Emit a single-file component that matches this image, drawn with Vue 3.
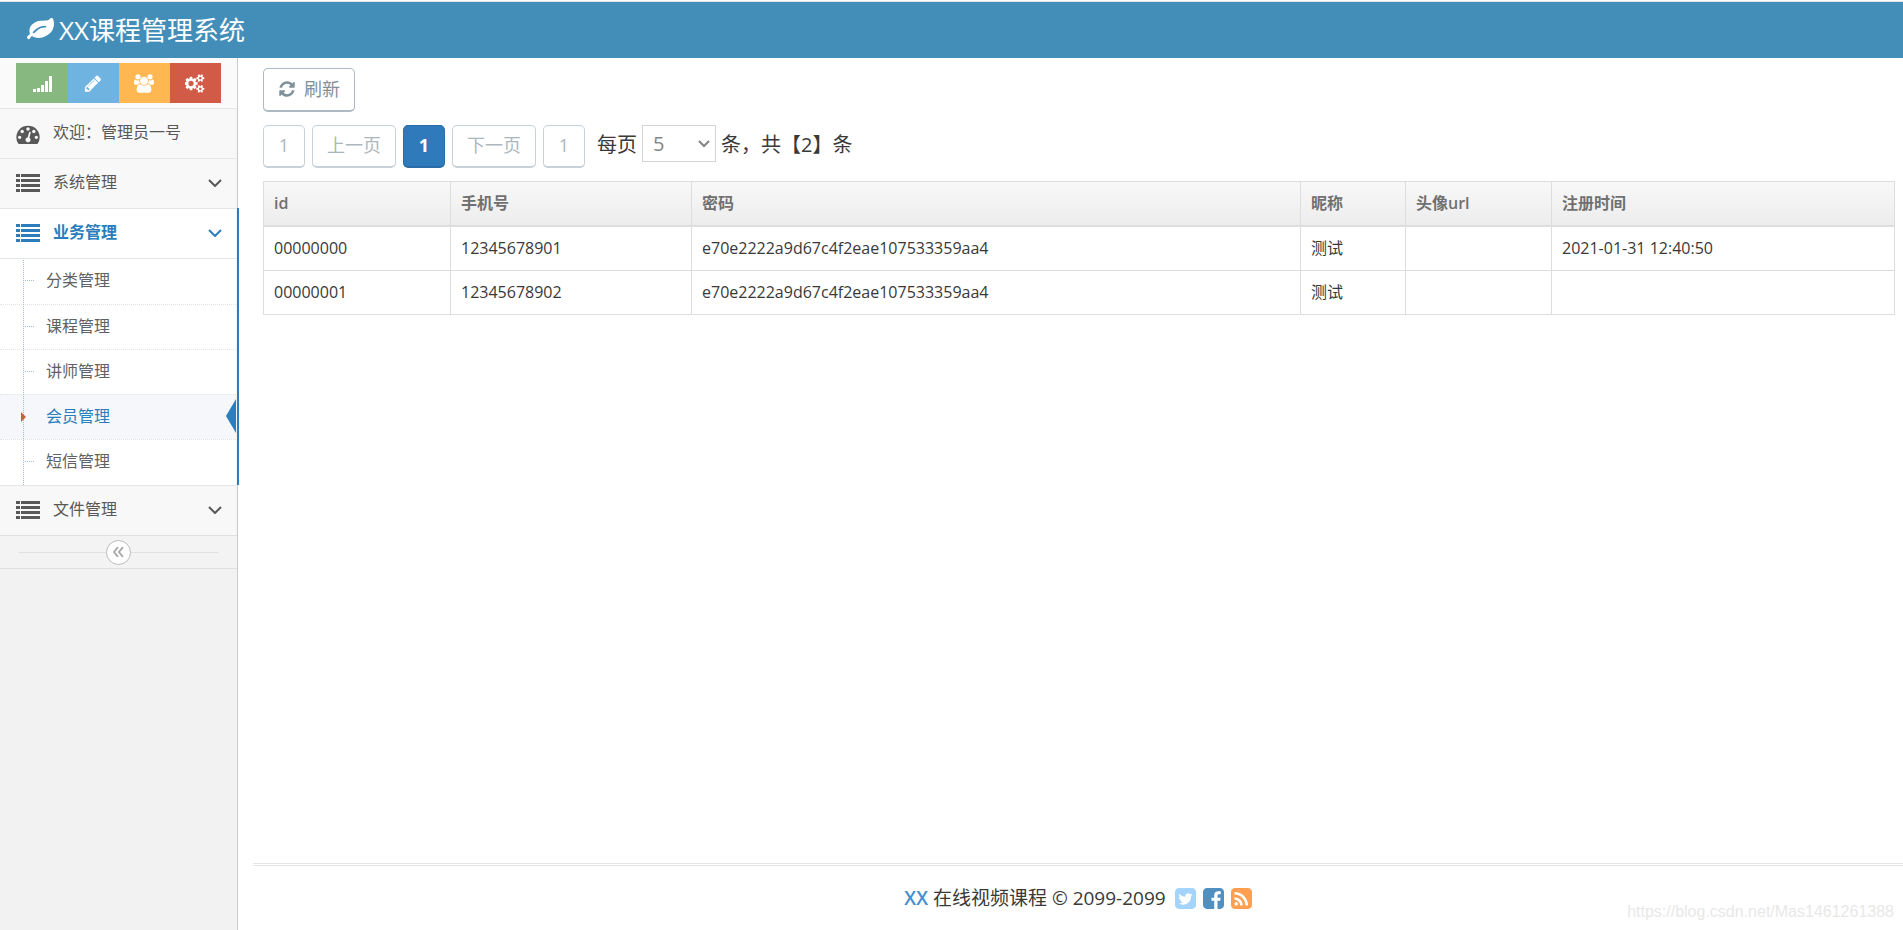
<script setup>
import { ref } from 'vue'

const pageSize = ref('5')
const submenu = ['分类管理', '课程管理', '讲师管理', '会员管理', '短信管理']
const activeSub = '会员管理'
const members = [
  { id: '00000000', mobile: '12345678901', password: 'e70e2222a9d67c4f2eae107533359aa4', name: '测试', photo: '', time: '2021-01-31 12:40:50' },
  { id: '00000001', mobile: '12345678902', password: 'e70e2222a9d67c4f2eae107533359aa4', name: '测试', photo: '', time: '' }
]
</script>

<template>
  <div class="app">
    <header class="navbar">
      <a class="brand" href="#">
        <svg class="leaf" viewBox="0 0 1792 1792" aria-hidden="true"><path d="M1280 704q0-26-19-45t-45-19q-172 0-318 49.5t-259.5 134-235.5 219.5q-19 21-19 45 0 26 19 45t45 19q24 0 45-19 27-24 74-71t67-66q137-124 268.5-176t313.5-52q26 0 45-19t19-45zm512-198q0 95-20 193-46 224-184.5 383t-357.5 268q-214 108-438 108-148 0-286-47-15-5-88-42t-96-37q-16 0-39.5 32t-45 70-52.5 70-60 32q-43 0-63.5-17.5t-45.5-59.5q-2-4-6-11t-5.5-10-3-9.5-1.5-13.5q0-35 31-73.5t68-65.5 68-56 31-48q0-4-14-38t-16-44q-9-51-9-104 0-115 43.5-220t119-184.5 170.5-139 204-95.5q55-18 145-25.5t179.5-9 178.5-6 163.5-24 113.5-56.5l29.5-29.5 29.5-28 27-20 36.5-16 43.5-4.5q39 0 70.5 46t47.5 112 24 124 8 96z" /></svg>
        <span>XX课程管理系统</span>
      </a>
    </header>

    <div class="body">
      <aside class="sidebar">
        <div class="shortcuts">
          <button class="green" type="button" aria-label="统计">
            <svg viewBox="-1 -1 20 19" aria-hidden="true"><path d="M0 14h3v3H0zM4 13h3v4H4zM8 10h3v7H8zM12 6h3v11h-3zM16 1h3v16h-3z" /></svg>
          </button>
          <button class="blue" type="button" aria-label="编辑">
            <svg viewBox="0 0 1792 1792" aria-hidden="true"><path d="M491 1536l91-91-235-235-91 91v107h128v128h107zm523-928q0-22-22-22-10 0-17 7l-542 542q-7 7-7 17 0 22 22 22 10 0 17-7l542-542q7-7 7-17zm-54-192l416 416-832 832h-416v-416zm683 96q0 53-37 90l-166 166-416-416 166-165q36-38 90-38 53 0 91 38l235 234q37 39 37 91z" /></svg>
          </button>
          <button class="orange" type="button" aria-label="用户">
            <svg viewBox="-64 0 1920 1792" aria-hidden="true"><path d="M529 896q-162 5-265 128h-134q-82 0-138-40.5t-56-118.5q0-353 124-353 6 0 43.5 21t97.5 42.5 119 21.5q67 0 133-23-5 37-5 66 0 139 81 256zm1071 637q0 120-73 189.5t-194 69.5h-874q-121 0-194-69.5t-73-189.5q0-53 3.5-103.5t14-109 26.5-108.5 43-97.5 62-81 85.5-53.5 111.5-20q10 0 43 21.5t73 48 107 48 135 21.5 135-21.5 107-48 73-48 43-21.5q61 0 111.5 20t85.5 53.5 62 81 43 97.5 26.5 108.5 14 109 3.5 103.5zm-1024-1277q0 106-75 181t-181 75-181-75-75-181 75-181 181-75 181 75 75 181zm704 384q0 159-112.5 271.5t-271.5 112.5-271.5-112.5-112.5-271.5 112.5-271.5 271.5-112.5 271.5 112.5 112.5 271.5zm576 225q0 78-56 118.5t-138 40.5h-134q-103-123-265-128 81-117 81-256 0-29-5-66 66 23 133 23 59 0 119-21.5t97.5-42.5 43.5-21q124 0 124 353zm-128-609q0 106-75 181t-181 75-181-75-75-181 75-181 181-75 181 75 75 181z" /></svg>
          </button>
          <button class="red" type="button" aria-label="设置">
            <svg viewBox="0 0 1920 1792" aria-hidden="true"><path d="M832 896q0-106-75-181t-181-75-181 75-75 181 75 181 181 75 181-75 75-181zm768 512q0-52-38-90t-90-38-90 38-38 90q0 53 37.5 90.5t90.5 37.5 90.5-37.5 37.5-90.5zm0-1024q0-52-38-90t-90-38-90 38-38 90q0 53 37.5 90.5t90.5 37.5 90.5-37.5 37.5-90.5zm-384 421v185q0 10-7 19.5t-16 10.5l-155 24q-11 35-32 76 34 48 90 115 7 11 7 20 0 12-7 19-23 30-82.5 89.5t-78.5 59.5q-11 0-21-7l-115-90q-37 19-77 31-11 108-23 155-7 24-30 24h-186q-11 0-20-7.5t-10-17.5l-23-153q-34-10-75-31l-118 89q-7 7-20 7-11 0-21-8-144-133-144-160 0-9 7-19 10-14 41-53t47-61q-23-44-35-82l-152-24q-10-1-17-9.5t-7-19.5v-185q0-10 7-19.5t16-10.5l155-24q11-35 32-76-34-48-90-115-7-11-7-20 0-12 7-20 22-30 82-89t79-59q11 0 21 7l115 90q34-18 77-32 11-108 23-154 7-24 30-24h186q11 0 20 7.5t10 17.5l23 153q34 10 75 31l118-89q8-7 20-7 11 0 21 8 144 133 144 160 0 8-7 19-12 16-42 54t-45 60q23 48 34 82l152 23q10 2 17 10.5t7 19.5zm640 533v140q0 16-149 31-12 27-30 52 51 113 51 138 0 4-4 7-122 71-124 71-8 0-46-47t-52-68q-20 2-30 2t-30-2q-14 21-52 68t-46 47q-2 0-124-71-4-3-4-7 0-25 51-138-18-25-30-52-149-15-149-31v-140q0-16 149-31 13-29 30-52-51-113-51-138 0-4 4-7 4-2 35-20t59-34 30-16q8 0 46 46.5t52 67.5q20-2 30-2t30 2q51-71 92-112l6-2q4 0 124 70 4 3 4 7 0 25-51 138 17 23 30 52 149 15 149 31zm0-1024v140q0 16-149 31-12 27-30 52 51 113 51 138 0 4-4 7-122 71-124 71-8 0-46-47t-52-68q-20 2-30 2t-30-2q-14 21-52 68t-46 47q-2 0-124-71-4-3-4-7 0-25 51-138-18-25-30-52-149-15-149-31v-140q0-16 149-31 13-29 30-52-51-113-51-138 0-4 4-7 4-2 35-20t59-34 30-16q8 0 46 46.5t52 67.5q20-2 30-2t30 2q51-71 92-112l6-2q4 0 124 70 4 3 4 7 0 25-51 138 17 23 30 52 149 15 149 31z" /></svg>
          </button>
        </div>

        <nav>
          <ul class="menu">
            <li>
              <a class="item" href="#">
                <svg class="gauge-icon" viewBox="0 128 1792 1536" aria-hidden="true"><path d="M384 1152q0-53-37.5-90.5t-90.5-37.5-90.5 37.5-37.5 90.5 37.5 90.5 90.5 37.5 90.5-37.5 37.5-90.5zm192-448q0-53-37.5-90.5t-90.5-37.5-90.5 37.5-37.5 90.5 37.5 90.5 90.5 37.5 90.5-37.5 37.5-90.5zm428 481l101-382q6-26-7.5-48.5t-38.5-29.5-48 6.5-30 39.5l-101 382q-60 5-107 43.5t-63 98.5q-20 77 20 146t117 89 146-20 89-117q16-60-6-117t-72-91zm660-33q0-53-37.5-90.5t-90.5-37.5-90.5 37.5-37.5 90.5 37.5 90.5 90.5 37.5 90.5-37.5 37.5-90.5zm-640-640q0-53-37.5-90.5t-90.5-37.5-90.5 37.5-37.5 90.5 37.5 90.5 90.5 37.5 90.5-37.5 37.5-90.5zm448 192q0-53-37.5-90.5t-90.5-37.5-90.5 37.5-37.5 90.5 37.5 90.5 90.5 37.5 90.5-37.5 37.5-90.5zm320 448q0 261-141 483-19 29-54 29h-1402q-35 0-54-29-141-221-141-483 0-182 71-348t191-286 286-191 348-71 348 71 286 191 191 286 71 348z" /></svg>
                <span class="label">欢迎：管理员一号</span>
              </a>
            </li>
            <li>
              <a class="item" href="#">
                <svg class="list-icon" viewBox="0 0 24 18" aria-hidden="true"><path d="M0 0h4v3H0zM5 0h19v3H5zM0 5h4v3H0zM5 5h19v3H5zM0 10h4v3H0zM5 10h19v3H5zM0 15h4v3H0zM5 15h19v3H5z" /></svg>
                <span class="label">系统管理</span>
                <svg class="angle" viewBox="0 0 14 8" aria-hidden="true"><path d="M1 1l6 6 6-6" /></svg>
              </a>
            </li>
            <li class="open">
              <a class="item" href="#">
                <svg class="list-icon" viewBox="0 0 24 18" aria-hidden="true"><path d="M0 0h4v3H0zM5 0h19v3H5zM0 5h4v3H0zM5 5h19v3H5zM0 10h4v3H0zM5 10h19v3H5zM0 15h4v3H0zM5 15h19v3H5z" /></svg>
                <span class="label">业务管理</span>
                <svg class="angle" viewBox="0 0 14 8" aria-hidden="true"><path d="M1 1l6 6 6-6" /></svg>
              </a>
              <ul class="submenu">
                <li v-for="s in submenu" :key="s" :class="{ current: s === activeSub }">
                  <a href="#">{{ s }}</a>
                </li>
              </ul>
            </li>
            <li>
              <a class="item" href="#">
                <svg class="list-icon" viewBox="0 0 24 18" aria-hidden="true"><path d="M0 0h4v3H0zM5 0h19v3H5zM0 5h4v3H0zM5 5h19v3H5zM0 10h4v3H0zM5 10h19v3H5zM0 15h4v3H0zM5 15h19v3H5z" /></svg>
                <span class="label">文件管理</span>
                <svg class="angle" viewBox="0 0 14 8" aria-hidden="true"><path d="M1 1l6 6 6-6" /></svg>
              </a>
            </li>
          </ul>
        </nav>

        <div class="collapse">
          <button type="button" aria-label="收起菜单">
            <svg viewBox="0 0 11 10" aria-hidden="true"><path d="M5 0L1 5l4 5M10 0L6 5l4 5" /></svg>
          </button>
        </div>
      </aside>

      <div class="main">
        <main class="content">
          <button class="btn refresh" type="button">
            <svg viewBox="0 0 1792 1792" aria-hidden="true"><path d="M1639 1056q0 5-1 7-64 268-268 434.5t-478 166.5q-146 0-282.5-55t-243.5-157l-129 129q-19 19-45 19t-45-19-19-45v-448q0-26 19-45t45-19h448q26 0 45 19t19 45-19 45l-137 137q71 66 161 102t187 36q134 0 250-65t186-179q11-17 53-117 8-23 30-23h192q13 0 22.5 9.5t9.5 22.5zm25-800v448q0 26-19 45t-45 19h-448q-26 0-45-19t-19-45 19-45l138-138q-148-137-349-137-134 0-250 65t-186 179q-11 17-53 117-8 23-30 23h-199q-13 0-22.5-9.5t-9.5-22.5v-7q65-268 270-434.5t480-166.5q146 0 284 55.5t245 156.5l130-129q19-19 45-19t45 19 19 45z" /></svg>
            <span>刷新</span>
          </button>

          <div class="pager">
            <button class="btn" type="button" disabled>1</button>
            <button class="btn" type="button" disabled>上一页</button>
            <button class="btn active" type="button">1</button>
            <button class="btn" type="button" disabled>下一页</button>
            <button class="btn" type="button" disabled>1</button>
            <div class="size">
              <label class="size-text" for="page-size">每页</label>
              <span class="select">
                <select id="page-size" v-model="pageSize">
                  <option>1</option>
                  <option>5</option>
                  <option>10</option>
                  <option>20</option>
                </select>
                <svg viewBox="0 0 12 8" aria-hidden="true"><path d="M1 1l5 5 5-5" /></svg>
              </span>
              <span class="size-text">条，共【2】条</span>
            </div>
          </div>

          <table>
            <colgroup>
              <col class="c-id"><col class="c-mobile"><col><col class="c-name"><col class="c-photo"><col class="c-time">
            </colgroup>
            <thead>
              <tr><th>id</th><th>手机号</th><th>密码</th><th>昵称</th><th>头像url</th><th>注册时间</th></tr>
            </thead>
            <tbody>
              <tr v-for="m in members" :key="m.id">
                <td>{{ m.id }}</td><td>{{ m.mobile }}</td><td>{{ m.password }}</td><td>{{ m.name }}</td><td>{{ m.photo }}</td><td>{{ m.time }}</td>
              </tr>
            </tbody>
          </table>
        </main>

        <footer class="footer">
          <span><b>XX</b> 在线视频课程 © 2099-2099</span>
          <span class="social">
            <a class="twitter" href="#" aria-label="Twitter"><svg viewBox="128 128 1536 1536" aria-hidden="true"><path d="M1408 610q-56 25-121 34 68-40 93-117-65 38-134 51-61-66-153-66-87 0-148.5 61.5t-61.5 148.5q0 29 5 48-129-7-242-65t-192-155q-29 50-29 106 0 114 91 175-47-1-100-26v2q0 75 50 133.5t123 72.5q-29 8-51 8-13 0-39-4 21 63 74.5 104t121.5 42q-116 90-261 90-26 0-50-3 148 94 322 94 112 0 210-35.5t168-95 120.5-137 75-162 24.5-168.5q0-18-1-27 63-45 105-109zm256-194v960q0 119-84.5 203.5t-203.5 84.5h-960q-119 0-203.5-84.5t-84.5-203.5v-960q0-119 84.5-203.5t203.5-84.5h960q119 0 203.5 84.5t84.5 203.5z" /></svg></a>
            <a class="facebook" href="#" aria-label="Facebook"><svg viewBox="128 128 1536 1536" aria-hidden="true"><path d="M1376 128q119 0 203.5 84.5t84.5 203.5v960q0 119-84.5 203.5t-203.5 84.5h-188v-595h199l30-232h-229v-148q0-56 23.5-84t91.5-28l122-1v-207q-63-9-178-9-136 0-217.5 80t-81.5 226v171h-200v232h200v595h-532q-119 0-203.5-84.5t-84.5-203.5v-960q0-119 84.5-203.5t203.5-84.5h960z" /></svg></a>
            <a class="rss" href="#" aria-label="RSS"><svg viewBox="128 128 1536 1536" aria-hidden="true"><path d="M640 1280q0-53-37.5-90.5t-90.5-37.5-90.5 37.5-37.5 90.5 37.5 90.5 90.5 37.5 90.5-37.5 37.5-90.5zm351 94q-13-232-177-396t-396-177q-14-1-24 9t-10 23v128q0 13 8.5 22t21.5 10q154 11 264 121t121 264q1 13 10 21.5t22 8.5h128q13 0 23-10t9-24zm384 1q-5-154-56-297.5t-139.5-260-205-205-260-139.5-297.5-56q-14-1-23 9-10 10-10 23v128q0 13 9 22t22 10q204 7 378 111.5t278.5 278.5 111.5 378q1 13 10 22t22 9h128q13 0 23-10 11-9 9-23zm289-959v960q0 119-84.5 203.5t-203.5 84.5h-960q-119 0-203.5-84.5t-84.5-203.5v-960q0-119 84.5-203.5t203.5-84.5h960q119 0 203.5 84.5t84.5 203.5z" /></svg></a>
          </span>
        </footer>
      </div>
    </div>
    <div class="watermark">https://blog.csdn.net/Mas1461261388</div>
  </div>
</template>

<style>
body {
  margin: 0;
  background: #fff;
}
</style>

<style scoped>
* {
  box-sizing: border-box;
}
.app {
  position: relative;
  display: flex;
  flex-direction: column;
  min-height: 100vh;
  padding-top: 1px;
  font-family: "Open Sans", "Noto Sans CJK SC", sans-serif;
  font-size: 16px;
  font-weight: 400;
  line-height: 24px;
  color: #393939;
}
button,
select {
  font: inherit;
  margin: 0;
}
a {
  text-decoration: none;
  color: inherit;
}
svg {
  display: block;
  fill: currentColor;
}
ul {
  list-style: none;
  margin: 0;
  padding: 0;
}
.navbar {
  display: flex;
  align-items: center;
  height: 57px;
  padding: 0 27px;
  border-top: 1px solid #e4e4e4;
  background: #438eb9;
}
.brand {
  display: flex;
  align-items: center;
  gap: 5px;
  padding-bottom: 1px;
  color: #fff;
  font-size: 26px;
  line-height: 32px;
}
.leaf {
  width: 27px;
  height: 27px;
}
.body {
  flex: 1;
  display: flex;
}
.sidebar {
  flex: none;
  width: 238px;
  border-right: 1px solid #ccc;
  background: #f2f2f2;
}
.shortcuts {
  display: flex;
  height: 50px;
  padding: 5px 16px;
  background: #fafafa;
}
.shortcuts button {
  flex: 1;
  display: flex;
  align-items: center;
  justify-content: center;
  padding: 0;
  border: 0;
  color: #fff;
}
.shortcuts svg {
  width: 20px;
  height: 19px;
}
.green { background: #87b87f; }
.blue { background: #6fb3e0; }
.orange { background: #ffb752; }
.red { background: #d15b47; }
.item {
  display: flex;
  align-items: center;
  height: 50px;
  margin-right: 1px;
  padding: 0 14px 0 16px;
  border-top: 1px solid #e5e5e5;
  background: #f8f8f8;
  color: #585858;
}
.gauge-icon {
  flex: none;
  width: 24px;
  height: 20px;
}
.list-icon {
  flex: none;
  width: 24px;
  height: 18px;
  margin-bottom: 2px;
}
.label {
  flex: 1;
  padding: 0 0 3px 13px;
}
.angle {
  width: 14px;
  height: 8px;
  margin-bottom: 2px;
}
.angle path {
  fill: none;
  stroke: currentColor;
  stroke-width: 2;
}
.open {
  margin-right: -2px;
  border-right: 2px solid #2b7dbc;
}
.open .item {
  background: #fff;
  color: #2b7dbc;
  font-weight: 700;
}
.submenu {
  position: relative;
  margin-right: 1px;
  padding-bottom: 1px;
  border-top: 1px solid #e5e5e5;
  background: #fff;
}
.submenu::before {
  content: "";
  position: absolute;
  left: 23px;
  top: 1px;
  bottom: 0;
  z-index: 1;
  border-left: 1px dotted #9dbdd6;
}
.submenu li {
  position: relative;
}
.submenu li + li {
  border-top: 1px dotted #e4e4e4;
}
.submenu li::before {
  content: "";
  position: absolute;
  left: 25px;
  top: 21px;
  width: 9px;
  border-top: 1px dotted #9dbdd6;
}
.submenu a {
  display: block;
  padding: 9px 0 11px 46px;
  color: #616161;
}
.submenu li:first-child a {
  padding-bottom: 12px;
}
.submenu .current {
  background: #f5f7fa;
}
.submenu .current a {
  color: #2b7dbc;
}
.submenu .current::before {
  left: 21px;
  top: 17px;
  z-index: 2;
  width: 5px;
  height: 10px;
  border: 0;
  background: #c86139;
  clip-path: polygon(0 0, 100% 50%, 0 100%);
}
.submenu .current::after {
  content: "";
  position: absolute;
  right: 0;
  top: 4px;
  width: 10px;
  height: 34px;
  background: #2b7dbc;
  clip-path: polygon(100% 0, 0 50%, 100% 100%);
}
.collapse {
  display: flex;
  align-items: center;
  height: 34px;
  padding: 0 19px;
  border-top: 1px solid #e0e0e0;
  border-bottom: 1px solid #e0e0e0;
  background: #f3f3f3;
}
.collapse::before,
.collapse::after {
  content: "";
  flex: 1;
  border-top: 1px solid #e0e0e0;
}
.collapse button {
  display: flex;
  align-items: center;
  justify-content: center;
  width: 25px;
  height: 25px;
  padding: 0;
  border: 1px solid #bbb;
  border-radius: 50%;
  background: #fff;
  color: #aaa;
}
.collapse svg {
  width: 11px;
  height: 10px;
}
.collapse path {
  fill: none;
  stroke: currentColor;
  stroke-width: 2;
}
.main {
  flex: 1;
  min-width: 0;
  display: flex;
  flex-direction: column;
}
.content {
  flex: 1;
  padding: 10px 8px 10px 25px;
}
.btn {
  display: inline-flex;
  align-items: center;
  justify-content: center;
  min-width: 42px;
  height: 43px;
  padding: 0 14px 2px;
  border: 1px solid #abbac3;
  border-bottom-width: 2px;
  border-radius: 5px;
  background: #fff;
  color: #80909a;
  font-size: 18px;
}
.refresh {
  display: flex;
  gap: 8px;
  height: 44px;
}
.refresh svg {
  width: 18px;
  height: 18px;
}
.pager {
  display: flex;
  align-items: flex-start;
  gap: 7px;
  margin: 13px 0;
}
.btn:disabled {
  opacity: 0.65;
}
.btn.active {
  border-color: #2a6da8;
  background: #2e7aba;
  color: #fff;
  font-weight: 700;
}
.size {
  display: flex;
  align-items: center;
  gap: 5px;
  padding-left: 5px;
  font-size: 20px;
}
.size-text {
  padding-top: 3px;
}
.select {
  position: relative;
}
.size select {
  display: block;
  appearance: none;
  width: 74px;
  height: 37px;
  padding: 0 10px;
  border: 1px solid #d5d5d5;
  border-radius: 0;
  background: #fff;
  color: #858585;
}
.select svg {
  position: absolute;
  right: 6px;
  top: 15px;
  width: 12px;
  height: 8px;
  color: #858585;
  pointer-events: none;
}
.select path {
  fill: none;
  stroke: currentColor;
  stroke-width: 2;
}
table {
  width: 100%;
  table-layout: fixed;
  border-collapse: collapse;
}
.c-id { width: 187px; }
.c-mobile { width: 241px; }
.c-name { width: 105px; }
.c-photo { width: 146px; }
.c-time { width: 343px; }
th,
td {
  padding: 9px 10px 10px;
  border: 1px solid #ddd;
  text-align: left;
}
th {
  border-bottom-width: 2px;
  color: #707070;
  font-weight: 600;
}
thead tr {
  background: linear-gradient(#f8f8f8, #ececec);
}
.footer {
  display: flex;
  align-items: center;
  justify-content: center;
  gap: 9px;
  height: 67px;
  margin-left: 15px;
  border-top: 3px double #e5e5e5;
  font-size: 19px;
}
.footer b {
  color: #478fca;
  font-weight: 600;
}
.social {
  display: flex;
  gap: 7px;
}
.social svg {
  width: 21px;
  height: 21px;
}
.twitter { color: #a4d3fb; }
.facebook { color: #5090c1; }
.rss { color: #ff9f4f; }
.watermark {
  position: absolute;
  right: 9px;
  bottom: 8px;
  font-family: "Liberation Sans", Arial, sans-serif;
  font-size: 16px;
  line-height: 20px;
  color: #e8e8e8;
}
</style>
